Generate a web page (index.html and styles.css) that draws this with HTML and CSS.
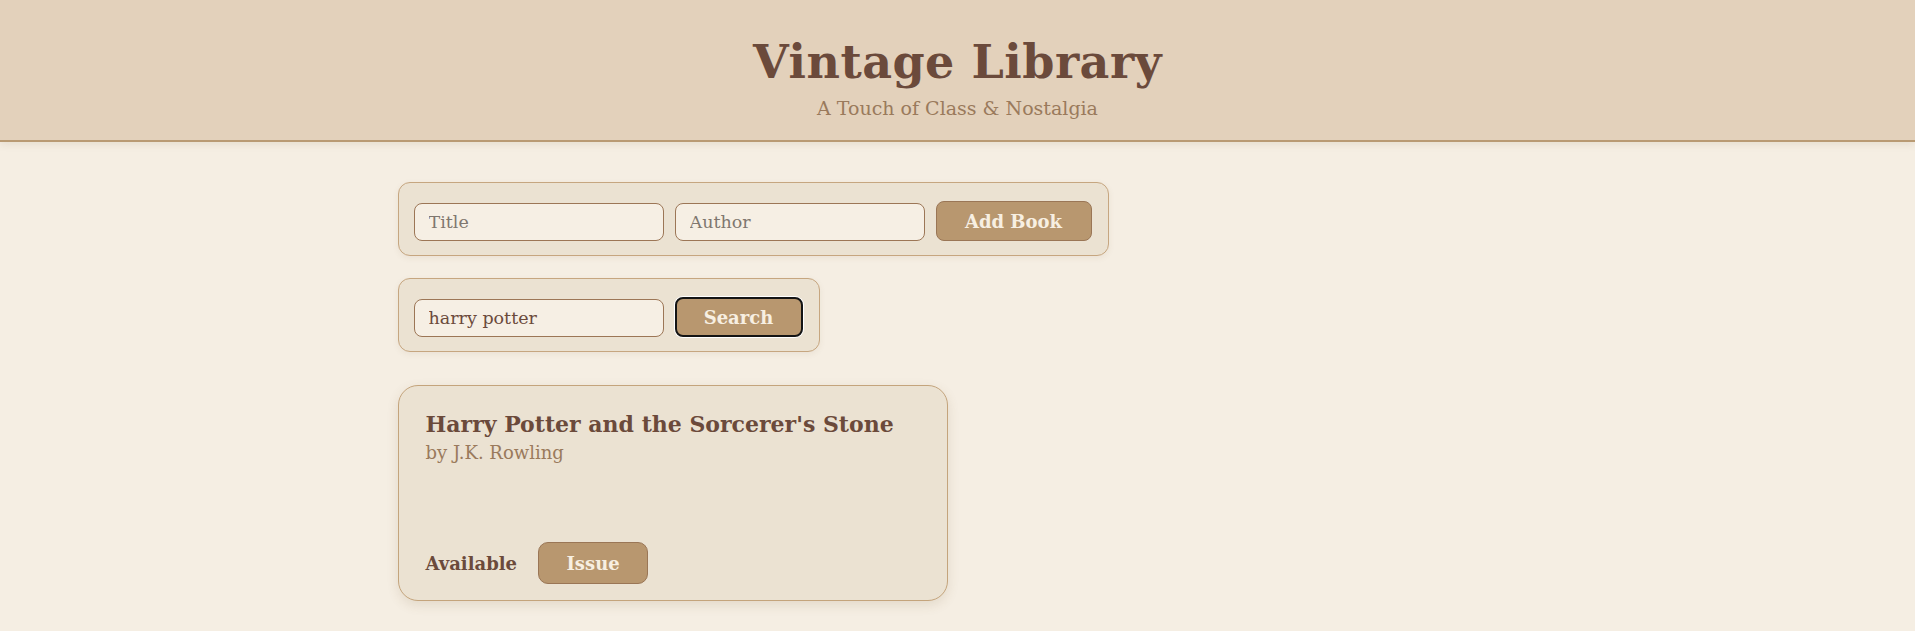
FILE: index.html
```html
<!DOCTYPE html>
<html lang="en">
<head>
<meta charset="utf-8">
<title>Vintage Library</title>
<link rel="stylesheet" href="styles.css">
</head>
<body>
<header class="site-header">
  <h1 class="site-title">Vintage Library</h1>
  <p class="site-tagline">A Touch of Class &amp; Nostalgia</p>
</header>
<main class="container">
  <form class="panel-form">
    <input class="field" type="text" placeholder="Title">
    <input class="field" type="text" placeholder="Author">
    <button class="btn btn-add" type="button">Add Book</button>
  </form>
  <form class="panel-form">
    <input class="field field-filled" type="text" value="harry potter">
    <button class="btn btn-search is-focused" type="button">Search</button>
  </form>
  <section class="book-grid">
    <article class="book-card">
      <div class="book-info">
        <h2 class="book-title">Harry Potter and the Sorcerer's Stone</h2>
        <p class="book-author">by J.K. Rowling</p>
      </div>
      <div class="book-actions">
        <span class="book-status">Available</span>
        <button class="btn btn-issue" type="button">Issue</button>
      </div>
    </article>
  </section>
</main>
</body>
</html>
```
FILE: styles.css
```css
* { box-sizing: border-box; }

html, body {
  margin: 0;
  padding: 0;
}

body {
  background: #f5eee3;
  font-family: Georgia, "DejaVu Serif", serif;
  color: #6b4a3b;
  min-height: 631px;
}

.site-header {
  height: 142px;
  background: #e3d1bb;
  border-bottom: 2px solid #b99a73;
  box-shadow: 0 2px 8px rgba(120, 90, 50, 0.12);
  text-align: center;
  padding-top: 35px;
}

.site-title {
  margin: 0;
  font-size: 46px;
  line-height: 54px;
  font-weight: bold;
  color: #6b4a3b;
  letter-spacing: 0.5px;
}

.site-tagline {
  margin: 7px 0 0;
  font-size: 19px;
  line-height: 24px;
  color: #9a7a5c;
}

.container {
  width: 1120px;
  margin: 40px auto 0;
  display: flex;
  flex-direction: column;
  align-items: flex-start;
  gap: 22px;
}

.panel-form {
  display: flex;
  align-items: flex-end;
  gap: 11px;
  padding: 18px 16px 14px 15px;
  background: #ebe2d2;
  border: 1px solid #c6a680;
  border-radius: 12px;
  box-shadow: 0 2px 6px rgba(120, 90, 50, 0.08);
  margin: 0;
}

.field {
  width: 250px;
  height: 38px;
  padding: 0 14px;
  border: 1px solid #9c7656;
  border-radius: 8px;
  background: #f6efe4;
  font-family: Georgia, "DejaVu Serif", serif;
  font-size: 17.5px;
  color: #6b4a3b;
  outline: none;
}

.field::placeholder {
  color: #7f776f;
}

.btn {
  height: 40px;
  border: 1px solid #9a7656;
  border-radius: 8px;
  background: #b8976f;
  color: #f7efe2;
  font-family: Georgia, "DejaVu Serif", serif;
  font-weight: bold;
  font-size: 18px;
  cursor: pointer;
  padding: 0;
}

.btn-add { width: 156px; }
.btn-search { width: 128px; }

.is-focused {
  border: 2px solid #141414;
  box-shadow: 0 0 0 1px #ffffff;
}

.book-grid {
  width: 100%;
  display: grid;
  grid-template-columns: repeat(2, 1fr);
  gap: 20px;
  margin-top: 11px;
}

.book-card {
  height: 216px;
  display: flex;
  flex-direction: column;
  justify-content: space-between;
  padding: 23px 24px 16px 27px;
  background: #ebe2d2;
  border: 1px solid #c4a47c;
  border-radius: 20px;
  box-shadow: 0 4px 12px rgba(120, 90, 50, 0.14);
}

.book-title {
  margin: 0;
  font-size: 22px;
  line-height: 30px;
  font-weight: bold;
  color: #6b4a3b;
}

.book-author {
  margin: 2px 0 0;
  font-size: 18px;
  line-height: 24px;
  color: #9a7a5c;
}

.book-actions {
  display: flex;
  align-items: center;
  gap: 21px;
}

.book-status {
  font-weight: bold;
  font-size: 18px;
  color: #6b4a3b;
}

.btn-issue {
  width: 110px;
  height: 42px;
  border-radius: 10px;
}
```
